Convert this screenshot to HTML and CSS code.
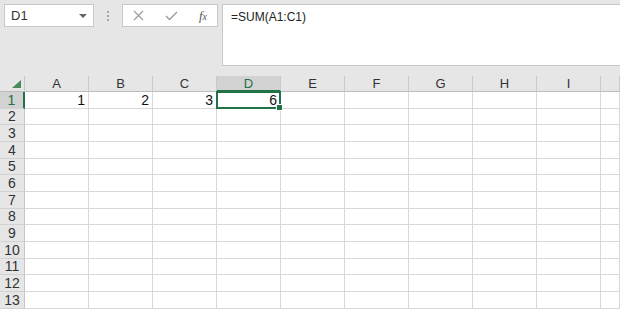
FILE: index.html
```html
<!DOCTYPE html>
<html lang="en">
<head>
    <meta charset="UTF-8">
    <title>Sheet</title>
    <link rel="stylesheet" href="styles.css">
</head>
<body>
    <div class="formula-bar">
        <div class="name-box">
            <span>D1</span>
            <span class="caret"></span>
        </div>
        <div class="divider"><span></span><span></span><span></span></div>
        <div class="fx-buttons">
            <svg width="11" height="11" viewBox="0 0 11 11"><path d="M1 1L10 10M10 1L1 10" stroke="#9a9a9a" stroke-width="1.1" fill="none"/></svg>
            <svg width="13" height="10" viewBox="0 0 13 10"><path d="M1 5L4.5 8.5L12 1" stroke="#9a9a9a" stroke-width="1.3" fill="none"/></svg>
            <span class="fx">f<small>x</small></span>
        </div>
        <div class="formula-input">=SUM(A1:C1)</div>
    </div>

    <div class="sheet" id="sheet"></div>

    <script>
        const sheet = document.getElementById('sheet');
        const cols = ['A', 'B', 'C', 'D', 'E', 'F', 'G', 'H', 'I', ''];
        const values = { A1: '1', B1: '2', C1: '3', D1: '6' };

        // header row
        const corner = document.createElement('div');
        corner.className = 'corner';
        sheet.appendChild(corner);
        cols.forEach(c => {
            const h = document.createElement('div');
            h.className = 'col-head' + (c === 'D' ? ' active' : '');
            h.textContent = c;
            sheet.appendChild(h);
        });

        for (let r = 1; r <= 13; r++) {
            const rh = document.createElement('div');
            rh.className = 'row-head' + (r === 1 ? ' active' : '');
            rh.textContent = r;
            sheet.appendChild(rh);
            cols.forEach(c => {
                const cell = document.createElement('div');
                cell.className = 'cell';
                if (c + r === 'D1') cell.classList.add('selected');
                cell.textContent = values[c + r] || '';
                sheet.appendChild(cell);
            });
        }
    </script>
</body>
</html>
```

FILE: styles.css
```css
* {
    box-sizing: border-box;
}
body {
    margin: 0;
    width: 620px;
    height: 309px;
    overflow: hidden;
    background-color: #e6e6e6;
    font-family: 'Liberation Sans', Arial, sans-serif;
    color: #333;
}

/* Formula bar */
.formula-bar {
    display: flex;
    align-items: flex-start;
    height: 76px;
    padding: 4px 0 0 4px;
}
.name-box {
    width: 90px;
    height: 23px;
    background-color: #fff;
    border: 1px solid #c8c8c8;
    display: flex;
    align-items: center;
    justify-content: space-between;
    padding: 0 6px 0 6px;
    font-size: 13px;
}
.caret {
    width: 0;
    height: 0;
    border-left: 4px solid transparent;
    border-right: 4px solid transparent;
    border-top: 4px solid #666;
}
.divider {
    width: 28px;
    height: 23px;
    display: flex;
    flex-direction: column;
    align-items: center;
    justify-content: center;
    gap: 2px;
}
.divider span {
    width: 2px;
    height: 2px;
    background-color: #a8a8a8;
}
.fx-buttons {
    width: 96px;
    height: 23px;
    background-color: #fff;
    border: 1px solid #c8c8c8;
    display: flex;
    align-items: center;
    justify-content: space-between;
    padding: 0 10px 0 10px;
}
.fx {
    font-family: 'Liberation Serif', serif;
    font-style: italic;
    font-size: 13px;
    color: #555;
}
.fx small {
    font-size: 10px;
}
.formula-input {
    flex: 1;
    height: 62px;
    margin-left: 4px;
    margin-right: -4px;
    background-color: #fff;
    border: 1px solid #c8c8c8;
    padding: 5px 8px;
    font-size: 12px;
    color: #222;
}

/* Grid */
.sheet {
    display: grid;
    grid-template-columns: 25px repeat(9, 64px) 1fr;
    grid-template-rows: 16px repeat(13, 16.667px);
    font-size: 13px;
}
.corner {
    position: relative;
    background-color: #e6e6e6;
    border-right: 1px solid #c6c6c6;
    border-bottom: 1px solid #bdbdbd;
}
.corner::after {
    content: '';
    position: absolute;
    right: 3px;
    bottom: 3px;
    width: 0;
    height: 0;
    border-left: 9px solid transparent;
    border-bottom: 8px solid #4a8a5c;
}
.col-head {
    display: flex;
    align-items: center;
    justify-content: center;
    background-color: #e6e6e6;
    border-right: 1px solid #cacaca;
    border-bottom: 1px solid #bdbdbd;
}
.col-head.active {
    background-color: #d2d2d2;
    color: #217346;
    border-bottom: 2px solid #217346;
}
.row-head {
    display: flex;
    align-items: center;
    justify-content: center;
    background-color: #e6e6e6;
    border-right: 1px solid #c6c6c6;
    border-bottom: 1px solid #d2d2d2;
    font-size: 14px;
}
.row-head.active {
    background-color: #d2d2d2;
    color: #217346;
    border-right: 2px solid #217346;
}
.cell {
    display: flex;
    align-items: center;
    justify-content: flex-end;
    padding-right: 3px;
    background-color: #fff;
    border-right: 1px solid #d8d8d8;
    border-bottom: 1px solid #d8d8d8;
    font-size: 14px;
    color: #111;
}
.cell.selected {
    position: relative;
}
.cell.selected::before {
    content: '';
    position: absolute;
    left: -1px;
    top: -1px;
    right: -1px;
    bottom: -1px;
    border: 2px solid #217346;
}
.cell.selected::after {
    content: '';
    position: absolute;
    right: -3px;
    bottom: -3px;
    width: 5px;
    height: 5px;
    background-color: #217346;
    border: 1px solid #fff;
    box-sizing: content-box;
}
```
